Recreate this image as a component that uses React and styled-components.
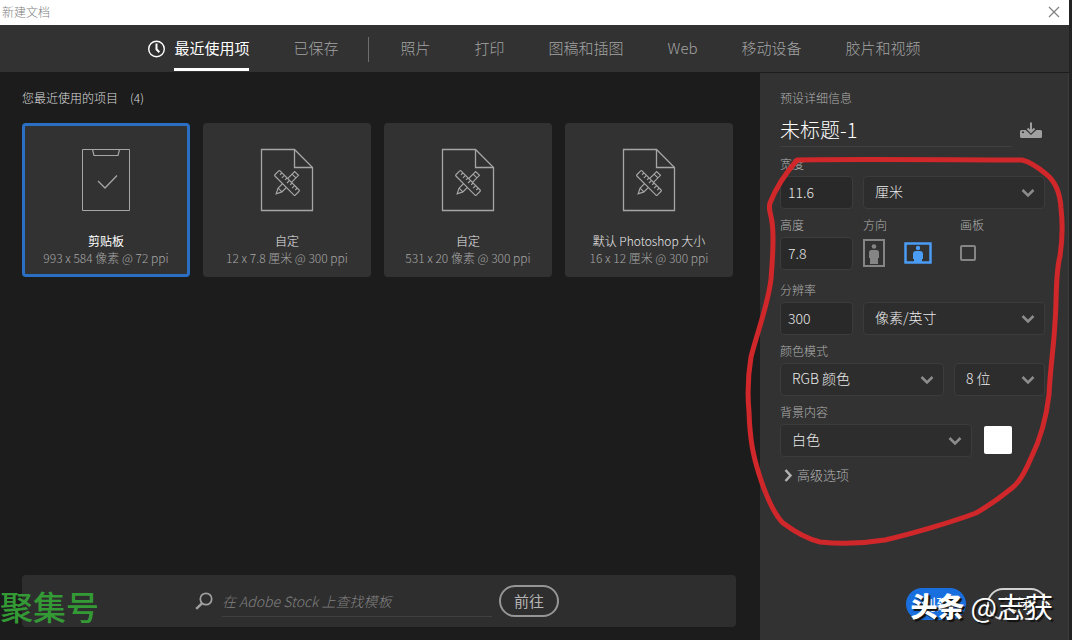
import React, { useState } from "react";
import styled, { createGlobalStyle } from "styled-components";

const GlobalStyle = createGlobalStyle`
  * {
    box-sizing: border-box;
  }

  body {
    margin: 0;
    background-color: #232323;
  }

  body, button, input, select {
    font-family: "Noto Sans CJK SC", "Noto Sans", sans-serif;
    font-weight: 300;
  }
`;

const Dialog = styled.div`
  position: relative;
  display: flex;
  flex-direction: column;
  min-height: 100vh;
  margin-right: 3px;
  background-color: #1c1c1c;
  color: #b0b0b0;
`;

const TitleBar = styled.header`
  display: flex;
  align-items: center;
  justify-content: space-between;
  height: 25px;
  padding: 0 9px 2px 2px;
  background-color: #ffffff;
  color: #808080;
`;

const WindowTitle = styled.h1`
  margin: 0;
  font-size: 12px;
  line-height: 16px;
  font-weight: 300;
`;

const IconButton = styled.button`
  display: flex;
  padding: 0;
  border: 0;
  background: none;
  color: inherit;
`;

const TabBar = styled.nav`
  display: flex;
  justify-content: center;
  gap: 44px;
  height: 48px;
  background-color: #323232;
  border-bottom: 1px solid #1c1c1c;
`;

const TabGroup = styled.div`
  display: flex;
  align-items: flex-start;
  gap: 9px;
  color: #ffffff;

  svg {
    margin-top: 15px;
  }
`;

const Tab = styled.button`
  height: 46px;
  padding: 3px 0 0;
  border: 0;
  border-bottom: 3px solid ${(props) => (props.$active ? "#ffffff" : "transparent")};
  background: none;
  color: ${(props) => (props.$active ? "#ffffff" : "#a3a3a3")};
  font-size: 15px;
  line-height: 20px;
  font-weight: ${(props) => (props.$active ? 400 : 300)};
  white-space: nowrap;
`;

const TabDivider = styled.span`
  width: 1px;
  height: 25px;
  margin: 12px -13px 0 -14px;
  background-color: #6e6e6e;
`;

const Body = styled.div`
  display: flex;
  flex: 1;
`;

const Main = styled.main`
  display: flex;
  flex: 1;
  flex-direction: column;
  min-width: 0;
  padding: 17px 24px 13px 22px;
`;

const SectionTitle = styled.h2`
  display: flex;
  gap: 12px;
  margin: 0 0 17px;
  color: #dcdcdc;
  font-size: 12px;
  line-height: 16px;
  font-weight: 300;
`;

const CardGrid = styled.div`
  display: grid;
  grid-template-columns: repeat(auto-fill, 168px);
  gap: 13px;
`;

const Card = styled.button`
  display: flex;
  flex-direction: column;
  align-items: center;
  height: 154px;
  padding: 22px 0 0;
  border: 3px solid ${(props) => (props.$selected ? "#2b6fc4" : "#323232")};
  border-radius: 4px;
  background-color: #323232;
  color: #a6a6a6;
`;

const CardName = styled.span`
  margin-top: 21px;
  color: ${(props) => (props.$selected ? "#ffffff" : "#ebebeb")};
  font-size: 12px;
  line-height: 16px;
  font-weight: ${(props) => (props.$selected ? 400 : 300)};
`;

const CardSize = styled.span`
  font-size: 12px;
  line-height: 17px;
  white-space: nowrap;
`;

const StockSearch = styled.form`
  display: flex;
  align-items: center;
  justify-content: center;
  height: 52px;
  margin-top: auto;
  padding-right: 4px;
  border-radius: 4px;
  background-color: #2e2e2e;
`;

const StockInput = styled.input`
  width: 270px;
  height: 32px;
  margin: 0 7px 0 9px;
  padding: 0;
  border: 0;
  border-bottom: 1px solid #404040;
  background: none;
  color: #d2d2d2;
  font-size: 14px;
  font-style: italic;

  &::placeholder {
    color: #808080;
  }
`;

const PillButton = styled.button`
  width: 60px;
  height: 32px;
  padding: 0;
  border: 2px solid ${(props) => (props.$primary ? "#1a6fdf" : props.$bright ? "#d0d0d0" : "#959595")};
  border-radius: 16px;
  background-color: ${(props) => (props.$primary ? "#1a6fdf" : "transparent")};
  color: ${(props) => (props.$primary || props.$bright ? "#ffffff" : "#b4b4b4")};
  font-size: 15px;
  line-height: 20px;
  font-weight: 400;
`;

const Panel = styled.aside`
  position: relative;
  display: flex;
  flex-direction: column;
  width: 309px;
  padding: 17px 23px 20px 20px;
  background-color: #323232;
  border-right: 1px solid #3c3c3c;
`;

const PanelTitle = styled.h2`
  margin: 0 0 8px;
  font-size: 12px;
  line-height: 16px;
  font-weight: 300;
`;

const NameRow = styled.div`
  display: flex;
  align-items: center;
  justify-content: space-between;
  gap: 8px;
  margin-bottom: 9px;
  padding-right: 3px;
`;

const NameInput = styled.input`
  flex: 1;
  min-width: 0;
  height: 33px;
  padding: 0 0 2px;
  border: 0;
  border-bottom: 1px solid #404040;
  background: none;
  color: #ffffff;
  font-size: 20px;
`;

const FieldRow = styled.div`
  display: flex;
  align-items: flex-end;
  gap: 10px;
  margin-bottom: ${(props) => (props.$wide ? 12 : 8)}px;
`;

const Field = styled.div`
  display: flex;
  flex-direction: column;
  flex: ${(props) => (props.$width ? `0 0 ${props.$width}px` : "1")};
  min-width: 0;
`;

const labelStyle = `
  height: 20px;
  padding: 0;
  font-size: 12px;
  line-height: 16px;
`;

const Label = styled.label`
  ${labelStyle}
`;

const Caption = styled.span`
  ${labelStyle}
`;

const TextInput = styled.input`
  width: 100%;
  height: 33px;
  padding: 0 8px 2px 7px;
  border: 1px solid #3c3c3c;
  border-radius: 4px;
  background-color: #292929;
  color: #e6e6e6;
  font-size: 14px;
`;

const SelectBox = styled.div`
  position: relative;
  color: #8c8c8c;

  svg {
    position: absolute;
    right: 10px;
    top: 12px;
    pointer-events: none;
  }
`;

const SelectInput = styled.select`
  display: block;
  width: 100%;
  height: 33px;
  padding: 0 28px 4px 11px;
  border: 1px solid #3c3c3c;
  border-radius: 4px;
  appearance: none;
  background-color: #2d2d2d;
  color: #ebebeb;
  font-size: 14px;
`;

const Options = styled.div`
  display: flex;
  align-items: center;
  gap: 19px;
  height: 33px;
  padding-bottom: 2px;
`;

const OrientationOption = styled.label`
  display: flex;
  color: ${(props) => (props.$checked ? "#4b9cf5" : "#858585")};
`;

const HiddenRadio = styled.input`
  width: 0;
  height: 0;
  margin: 0;
  appearance: none;
`;

const Checkbox = styled.input`
  width: 16px;
  height: 16px;
  margin: 0;
  appearance: none;
  border: 2px solid #858585;
  border-radius: 2px;
`;

const Swatch = styled.button`
  width: 28px;
  height: 28px;
  margin: 0 33px 3px 2px;
  padding: 0;
  border: 0;
  border-radius: 2px;
  background-color: #ffffff;
`;

const Advanced = styled.button`
  display: flex;
  align-items: center;
  align-self: flex-start;
  gap: 4px;
  padding: 0 0 0 4px;
  border: 0;
  background: none;
  color: #b0b0b0;
  font-size: 13px;
  line-height: 20px;
`;

const PanelFooter = styled.div`
  display: flex;
  justify-content: flex-end;
  gap: 21px;
  margin: auto -2px 0 0;
`;

const Markup = styled.svg`
  position: absolute;
  left: -20px;
  top: 77px;
  pointer-events: none;
`;

const SiteMark = styled.div`
  position: absolute;
  left: 0;
  bottom: 14px;
  color: #339a35;
  font-size: 33px;
  line-height: 40px;
  font-weight: 500;
  pointer-events: none;
`;

const AuthorMark = styled.div`
  position: absolute;
  right: 16px;
  bottom: 14px;
  display: flex;
  align-items: center;
  gap: 6px;
  color: #ffffff;
  font-size: 28px;
  line-height: 40px;
  font-weight: 400;
  text-shadow: 2px 2px 1px #111111;
  white-space: nowrap;
  pointer-events: none;

  strong {
    font-size: 27px;
    font-weight: 900;
  }
`;

const presets = [
  { id: 1, name: "剪贴板", size: "993 x 584 像素 @ 72 ppi", clipboard: true },
  { id: 2, name: "自定", size: "12 x 7.8 厘米 @ 300 ppi" },
  { id: 3, name: "自定", size: "531 x 20 像素 @ 300 ppi" },
  { id: 4, name: "默认 Photoshop 大小", size: "16 x 12 厘米 @ 300 ppi" },
];

const categories = ["照片", "打印", "图稿和插图", "Web", "移动设备", "胶片和视频"];

const ClockIcon = () => (
  <svg width="17" height="18" viewBox="0 0 17 18" fill="none" stroke="currentColor">
    <circle cx="8.5" cy="9" r="7.8" strokeWidth="1.4" />
    <path d="M8.5 3.5v5.8l2.8 3" strokeWidth="2" />
  </svg>
);

const CloseIcon = () => (
  <svg width="12" height="12" viewBox="0 0 12 12" fill="none" stroke="currentColor">
    <path d="M1 1l10 10M11 1L1 11" strokeWidth="1.2" />
  </svg>
);

const ClipboardIcon = () => (
  <svg width="52" height="64" viewBox="0 0 52 64" fill="none" stroke="currentColor">
    <path d="M2.5 1.5h47v61h-47z" />
    <path d="M12.5 1.5l1.5 6h24l1.5-6" strokeWidth="1.2" />
    <path d="M18 33l7 7 12-12.5" strokeWidth="1.3" />
  </svg>
);

const DocumentIcon = () => (
  <svg width="54" height="64" viewBox="0 0 54 64" fill="none" stroke="currentColor">
    <path d="M1.5 1.5h33l18 18v43h-51z" strokeWidth="1.3" />
    <path d="M34.5 1.5v18h18" strokeWidth="1.3" />
    <g transform="translate(27 35) rotate(-45) scale(0.9)" strokeWidth="1.3">
      <path d="M-11 -3h26v6h-26l-6 -3z" />
      <path d="M-11 -3v6M11 -3v6" />
    </g>
    <g transform="translate(27 35) rotate(45) scale(0.9)" strokeWidth="1.3">
      <rect x="-16" y="-4" width="32" height="8" rx="1" fill="#323232" />
      <path d="M-12 -4v3M-8 -4v4M-4 -4v3M0 -4v4M4 -4v3M8 -4v4M12 -4v3" />
    </g>
  </svg>
);

const SearchIcon = () => (
  <svg width="18" height="18" viewBox="0 0 18 18" fill="none" stroke="#a0a0a0">
    <circle cx="11" cy="7" r="5.7" strokeWidth="1.7" />
    <path d="M7 11.3L1.2 16.8" strokeWidth="2.4" />
  </svg>
);

const SaveIcon = () => (
  <svg width="22" height="18" viewBox="0 0 22 18">
    <path
      d="M1.5 8h4.200l5.300 5 5.300-5h4.200q1.500 0 1.500 1.500v5q0 1.500-1.500 1.500h-19q-1.500 0-1.500-1.500v-5q0-1.500 1.500-1.500z"
      fill="#a0a0a0"
    />
    <path d="M2 9.500h2v1.500h-2z" fill="#323232" />
    <path d="M11 0.500v9M7.500 6.500l3.500 3.500 3.500-3.500" fill="none" stroke="#a0a0a0" strokeWidth="2" />
  </svg>
);

const ChevronIcon = () => (
  <svg width="14" height="10" viewBox="0 0 14 10" fill="none" stroke="currentColor">
    <path d="M1.5 2l5.5 5.5 5.5-5.5" strokeWidth="2.5" />
  </svg>
);

const ChevronRightIcon = () => (
  <svg width="9" height="14" viewBox="0 0 9 14" fill="none" stroke="currentColor">
    <path d="M1.5 2l5 5.5-5 5.5" strokeWidth="2.5" />
  </svg>
);

const PortraitIcon = () => (
  <svg width="22" height="28" viewBox="0 0 22 28">
    <path d="M1 1h20v26h-20z" fill="none" stroke="currentColor" strokeWidth="2" />
    <circle cx="11" cy="7.5" r="2.3" fill="currentColor" />
    <path d="M8.5 11h5q2.500 0 2.500 2.500v5.500h-1v6h-8v-6h-1v-5.500q0-2.500 2.500-2.500z" fill="currentColor" />
  </svg>
);

const LandscapeIcon = () => (
  <svg width="28" height="22" viewBox="0 0 28 22">
    <path d="M1.5 1.5h25v19h-25z" fill="none" stroke="currentColor" strokeWidth="2.5" />
    <circle cx="14" cy="6" r="2.200" fill="currentColor" />
    <path d="M12 9h4q3 0 3 3v5h-1v3h-8v-3h-1v-5q0-3 3-3z" fill="currentColor" />
  </svg>
);

const Select = ({ id, options, label }) => (
  <SelectBox>
    <SelectInput id={id} aria-label={label}>
      {options.map((option) => (
        <option key={option}>{option}</option>
      ))}
    </SelectInput>
    <ChevronIcon />
  </SelectBox>
);

const PresetCard = ({ preset, selected, onSelect }) => (
  <Card type="button" $selected={selected} onClick={onSelect}>
    {preset.clipboard ? <ClipboardIcon /> : <DocumentIcon />}
    <CardName $selected={selected}>{preset.name}</CardName>
    <CardSize>{preset.size}</CardSize>
  </Card>
);

const PresetDetails = () => {
  const [orientation, setOrientation] = useState("landscape");

  return (
    <Panel>
      <PanelTitle>预设详细信息</PanelTitle>
      <NameRow>
        <NameInput aria-label="名称" defaultValue="未标题-1" />
        <IconButton type="button" aria-label="存储预设">
          <SaveIcon />
        </IconButton>
      </NameRow>

      <FieldRow>
        <Field $width={73}>
          <Label htmlFor="width">宽度</Label>
          <TextInput id="width" defaultValue="11.6" />
        </Field>
        <Field>
          <Select label="单位" options={["厘米", "像素", "英寸"]} />
        </Field>
      </FieldRow>

      <FieldRow $wide>
        <Field $width={73}>
          <Label htmlFor="height">高度</Label>
          <TextInput id="height" defaultValue="7.8" />
        </Field>
        <Field $width={87}>
          <Caption>方向</Caption>
          <Options role="radiogroup" aria-label="方向">
            <OrientationOption $checked={orientation === "portrait"}>
              <HiddenRadio
                type="radio"
                name="orientation"
                aria-label="纵向"
                checked={orientation === "portrait"}
                onChange={() => setOrientation("portrait")}
              />
              <PortraitIcon />
            </OrientationOption>
            <OrientationOption $checked={orientation === "landscape"}>
              <HiddenRadio
                type="radio"
                name="orientation"
                aria-label="横向"
                checked={orientation === "landscape"}
                onChange={() => setOrientation("landscape")}
              />
              <LandscapeIcon />
            </OrientationOption>
          </Options>
        </Field>
        <Field>
          <Label htmlFor="artboard">画板</Label>
          <Options>
            <Checkbox id="artboard" type="checkbox" />
          </Options>
        </Field>
      </FieldRow>

      <FieldRow>
        <Field $width={73}>
          <Label htmlFor="resolution">分辨率</Label>
          <TextInput id="resolution" defaultValue="300" />
        </Field>
        <Field>
          <Select label="分辨率单位" options={["像素/英寸", "像素/厘米"]} />
        </Field>
      </FieldRow>

      <FieldRow>
        <Field $width={164}>
          <Label htmlFor="mode">颜色模式</Label>
          <Select id="mode" options={["RGB 颜色", "CMYK 颜色", "灰度"]} />
        </Field>
        <Field>
          <Select label="位深度" options={["8 位", "16 位", "32 位"]} />
        </Field>
      </FieldRow>

      <FieldRow>
        <Field>
          <Label htmlFor="background">背景内容</Label>
          <Select id="background" options={["白色", "黑色", "透明"]} />
        </Field>
        <Swatch type="button" aria-label="背景颜色" />
      </FieldRow>

      <Advanced type="button">
        <ChevronRightIcon />
        高级选项
      </Advanced>

      <PanelFooter>
        <PillButton type="button" $primary>
          创建
        </PillButton>
        <PillButton type="button" $bright>
          关闭
        </PillButton>
      </PanelFooter>

      <Markup width="332" height="410" viewBox="740 150 332 410" fill="none">
        <path
          d="M797 160C850 159 960 160 1022 160C1031 162 1040 169 1046 174C1055 181 1060 192 1061 208C1063 226 1062 243 1060 256C1055 275 1057 300 1055 322C1054 345 1050 370 1049 395C1046 420 1040 440 1031 458C1026 470 1020 482 1012 488C1001 497 990 505 976 513C955 521 915 533 885 540C860 544 840 544 820 542C808 539 795 532 783 523C772 512 765 493 759 474C753 455 750 440 749 412C747 390 748 375 751 357C757 333 768 305 771 279C773 255 774 235 772 222C771 213 768 210 770 203C775 190 785 174 797 160z"
          stroke="#d0272b"
          strokeWidth="5"
          strokeLinejoin="round"
        />
      </Markup>
    </Panel>
  );
};

const App = () => {
  const [selected, setSelected] = useState(1);

  return (
    <React.Fragment>
      <GlobalStyle />
      <Dialog>
        <TitleBar>
          <WindowTitle>新建文档</WindowTitle>
          <IconButton type="button" aria-label="关闭窗口">
            <CloseIcon />
          </IconButton>
        </TitleBar>

        <TabBar>
          <TabGroup>
            <ClockIcon />
            <Tab type="button" $active>
              最近使用项
            </Tab>
          </TabGroup>
          <Tab type="button">已保存</Tab>
          <TabDivider />
          {categories.map((category) => (
            <Tab key={category} type="button">
              {category}
            </Tab>
          ))}
        </TabBar>

        <Body>
          <Main>
            <SectionTitle>
              您最近使用的项目 <span>(4)</span>
            </SectionTitle>
            <CardGrid>
              {presets.map((preset) => (
                <PresetCard
                  key={preset.id}
                  preset={preset}
                  selected={selected === preset.id}
                  onSelect={() => setSelected(preset.id)}
                />
              ))}
            </CardGrid>
            <StockSearch onSubmit={(e) => e.preventDefault()}>
              <SearchIcon />
              <StockInput
                aria-label="查找模板"
                placeholder="在 Adobe Stock 上查找模板"
              />
              <PillButton type="submit">前往</PillButton>
            </StockSearch>
          </Main>
          <PresetDetails />
        </Body>

        <SiteMark>聚集号</SiteMark>
        <AuthorMark>
          <strong>头条</strong>
          <span>@志获</span>
        </AuthorMark>
      </Dialog>
    </React.Fragment>
  );
};

export default App;
